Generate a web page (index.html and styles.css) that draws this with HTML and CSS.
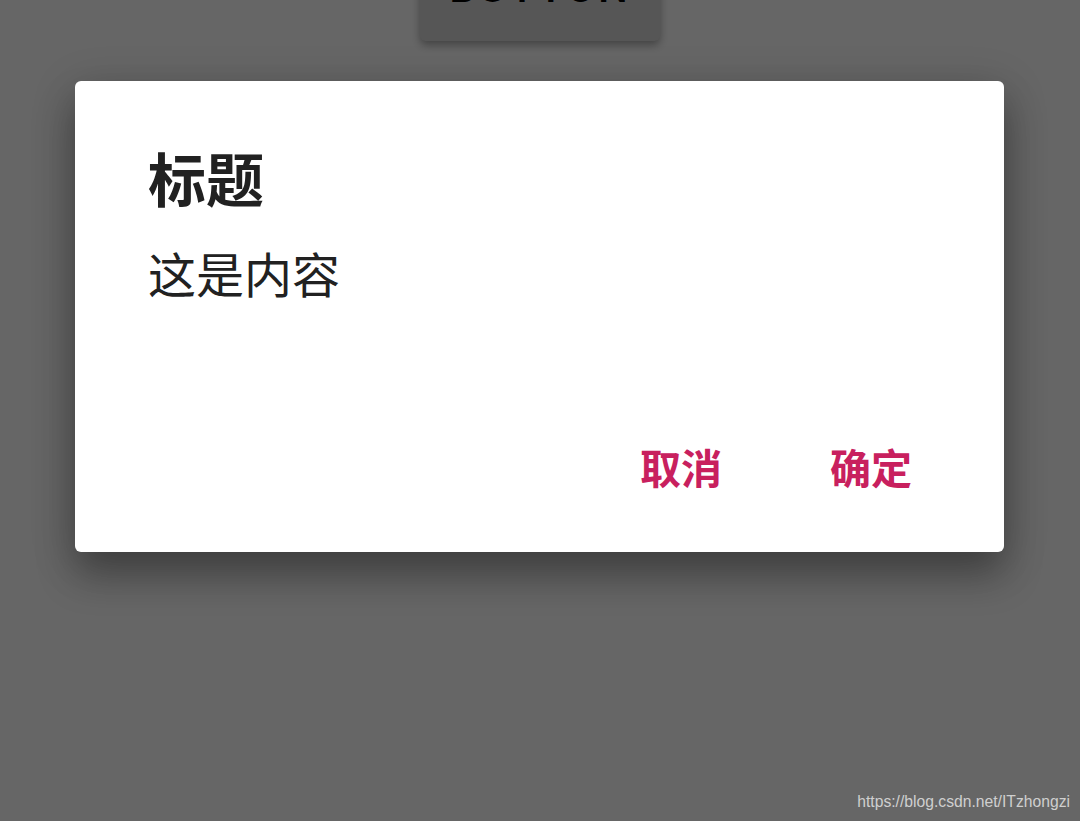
FILE: index.html
```html
<!DOCTYPE html>
<html lang="zh">
<head>
<meta charset="utf-8">
<title>Dialog</title>
<link rel="stylesheet" href="styles.css">
</head>
<body>
<main class="page">
  <button class="btn-main">BUTTON</button>
</main>
<div class="scrim">
  <div class="dialog">
    <h1 class="dialog-title">标题</h1>
    <p class="dialog-message">这是内容</p>
    <div class="dialog-actions">
      <button class="action">取消</button>
      <button class="action">确定</button>
    </div>
  </div>
</div>
<div class="watermark">https://blog.csdn.net/ITzhongzi</div>
</body>
</html>
```

FILE: styles.css
```css
html, body {
  margin: 0;
  padding: 0;
  width: 1080px;
  height: 821px;
  overflow: hidden;
}
body {
  background: #ffffff;
  font-family: "Noto Sans CJK SC", "Noto Sans", Roboto, sans-serif;
  position: relative;
}
.page {
  display: flex;
  justify-content: center;
}
.btn-main {
  margin-top: -67px;
  width: 240px;
  height: 108px;
  border: none;
  border-radius: 6px;
  background: #d8d8d8;
  color: #000;
  font-family: Roboto, "Noto Sans", sans-serif;
  font-weight: 500;
  font-size: 42px;
  letter-spacing: 3px;
  box-shadow: 0 4px 8px rgba(0,0,0,0.35);
  padding: 0;
}
.scrim {
  position: absolute;
  inset: 0;
  background: rgba(0,0,0,0.6);
  display: flex;
  justify-content: flex-start;
  align-items: flex-start;
  padding: 81px 0 0 75px;
  box-sizing: border-box;
}
.dialog {
  width: 929px;
  height: 471px;
  background: #ffffff;
  border-radius: 6px;
  box-shadow: 0 24px 38px rgba(0,0,0,0.28), 0 9px 46px rgba(0,0,0,0.2);
  box-sizing: border-box;
  padding: 66px 38px 0 73px;
  display: flex;
  flex-direction: column;
}
.dialog-title {
  margin: 0;
  font-size: 58px;
  line-height: 60px;
  font-weight: 700;
  color: #212121;
}
.dialog-message {
  margin: 41px 0 0;
  font-size: 48px;
  line-height: 48px;
  font-weight: 400;
  color: #212121;
}
.dialog-actions {
  margin-top: 149px;
  display: flex;
  justify-content: flex-end;
}
.action {
  width: 190px;
  height: 42px;
  padding: 0;
  border: none;
  background: transparent;
  font-family: "Noto Sans CJK SC", sans-serif;
  font-size: 41px;
  line-height: 42px;
  font-weight: 700;
  color: #c8205e;
  text-align: center;
}
.watermark {
  position: absolute;
  right: 10px;
  bottom: 10px;
  font-family: "Liberation Sans", Arial, sans-serif;
  font-size: 15.7px;
  color: #cfcfcf;
}
```
